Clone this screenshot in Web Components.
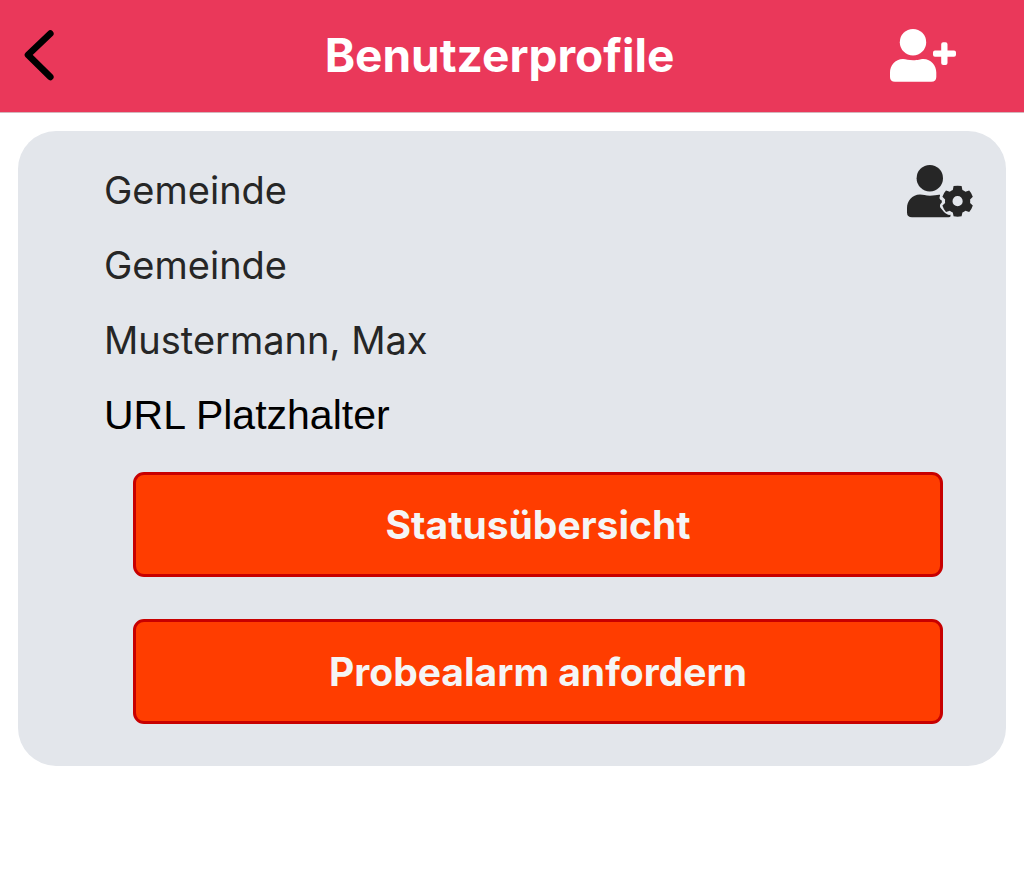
<!DOCTYPE html>
<html lang="de">
<head>
<meta charset="utf-8">
<meta name="viewport" content="width=device-width, initial-scale=1">
<title>Benutzerprofile</title>
<style>
  body { margin: 0; background: #fff; font-family: Inter, "Liberation Sans", sans-serif; color: #262626; }
</style>
</head>
<body>
<profile-app></profile-app>

<template id="app-tpl">
  <style>
    :host { display: block; }
    main { padding: 18px; }
  </style>
  <nav-header>Benutzerprofile</nav-header>
  <main>
    <profile-card>
      <profile-line>Gemeinde</profile-line>
      <profile-line>Gemeinde</profile-line>
      <profile-line>Mustermann, Max</profile-line>
      <profile-line kind="url">URL Platzhalter</profile-line>
      <action-button slot="actions">Statusübersicht</action-button>
      <action-button slot="actions">Probealarm anfordern</action-button>
    </profile-card>
  </main>
</template>

<template id="header-tpl">
  <style>
    :host { display: block; background: #ea385a; border-bottom: 1px solid #d3b6bc; }
    header { display: flex; align-items: center; padding: 27px 68px 29px 24px; }
    h1 { flex: 1; margin: 0; text-align: center; color: #fff; font-size: 46px; line-height: 56px; font-weight: 700; white-space: nowrap; }
    button { display: flex; flex: none; border: 0; padding: 0; background: none; cursor: pointer; }
    .back { width: 85px; }
    svg { display: block; }
  </style>
  <header>
    <button class="back" type="button" aria-label="Zurück">
      <svg width="30" height="52" viewBox="0 0 30 52" fill="none" stroke="#000" stroke-width="6.6" stroke-linecap="round" stroke-linejoin="round"><path d="M26.3 4.6 4 25.900l22.300 22"/></svg>
    </button>
    <h1><slot></slot></h1>
    <button type="button" aria-label="Profil hinzufügen">
      <svg width="66" height="54" viewBox="0 0 66 54" fill="#fff">
        <circle cx="23" cy="14.2" r="13.2"/>
        <path d="M13 31C5 31 0 37.500 0 44.500V49Q0 53.800 5 53.800H41.300Q46.300 53.800 46.300 49V44.500C46.300 37.500 41.300 31 33.300 31C30 31 28 32.300 23.200 32.300S16.300 31 13 31Z"/>
        <path d="M45 22.500h6.200v-6.200q0-2 2-2h2.300q2 0 2 2v6.200H64q2 0 2 2v2.200q0 2-2 2h-6.500v6.400q0 2-2 2h-2.300q-2 0-2-2v-6.400H45q-2 0-2-2v-2.200q0-2 2-2Z"/>
      </svg>
    </button>
  </header>
</template>

<template id="card-tpl">
  <style>
    :host { display: block; background: #e3e6eb; border-radius: 38px; padding: 22px 33px 42px 86px; }
    .top { display: flex; align-items: flex-start; }
    .lines { flex: 1; }
    .settings { display: block; flex: none; margin-top: 12px; border: 0; padding: 0; background: none; cursor: pointer; }
    svg { display: block; }
    .actions { display: flex; flex-direction: column; gap: 42px; padding: 19px 30px 0 29px; }
  </style>
  <div class="top">
    <div class="lines"><slot></slot></div>
    <button class="settings" type="button" aria-label="Profil bearbeiten">
      <svg width="66" height="54" viewBox="0 0 66 54" fill="#262626">
        <circle cx="22.800" cy="13.200" r="13.200"/>
        <path d="M13 29.500C5 29.500 0 36 0 43V47.500Q0 52.300 5 52.300H41.500Q43.500 52.300 43.500 51.300V49.800C41 50.300 39.500 49 37 47L33.300 42.500C32.500 40.500 33 39 34.800 37.500V35.500C32.500 34.500 32 33 33 30.700V29.800C30 29.500 27.500 30.700 23 30.700S16.300 29.500 13 29.500Z"/>
        <g transform="translate(50.600 36.200)">
          <path fill-rule="evenodd" d="M-4-15.100Q0-15.900 4-15.100L4.800-11.200Q6.500-10.600 7.800-9.500L11.600-10.700Q14.200-8 15.200-4.400L12.500-1.700Q12.700 0 12.500 1.700L15.200 4.400Q14.200 8 11.600 10.700L7.800 9.500Q6.500 10.600 4.800 11.200L4 15.100Q0 15.900-4 15.100L-4.800 11.200Q-6.500 10.600-7.800 9.500L-11.600 10.700Q-14.200 8-15.200 4.400L-12.500 1.700Q-12.700 0-12.500-1.700L-15.200-4.400Q-14.200-8-11.600-10.700L-7.800-9.500Q-6.500-10.600-4.800-11.200ZM0-5.100A5.100 5.100 0 1 0 0 5.100A5.100 5.100 0 1 0 0-5.100Z"/>
        </g>
      </svg>
    </button>
  </div>
  <div class="actions"><slot name="actions"></slot></div>
</template>

<template id="line-tpl">
  <style>
    :host { display: block; font-size: 38px; line-height: 75px; }
    :host([kind="url"]) { font-family: "Liberation Sans", Arial, sans-serif; font-size: 41px; color: #000; }
  </style>
  <slot></slot>
</template>

<template id="button-tpl">
  <style>
    :host { display: block; }
    button { display: block; box-sizing: border-box; width: 100%; padding: 26px; border: 3px solid #c80000; border-radius: 11px; background: #ff3d00; color: #f5f5f5; font: 700 39px/47px Inter, "Liberation Sans", sans-serif; cursor: pointer; }
  </style>
  <button type="button"><slot></slot></button>
</template>

<script>
  class TemplateElement extends HTMLElement {
    constructor() {
      super();
      const tpl = document.getElementById(this.constructor.template);
      this.attachShadow({ mode: "open" }).append(tpl.content.cloneNode(true));
    }
  }
  class ProfileLine extends TemplateElement { static template = "line-tpl"; }
  class ActionButton extends TemplateElement { static template = "button-tpl"; }
  class ProfileCard extends TemplateElement { static template = "card-tpl"; }
  class NavHeader extends TemplateElement { static template = "header-tpl"; }
  class ProfileApp extends TemplateElement { static template = "app-tpl"; }
  customElements.define("profile-line", ProfileLine);
  customElements.define("action-button", ActionButton);
  customElements.define("profile-card", ProfileCard);
  customElements.define("nav-header", NavHeader);
  customElements.define("profile-app", ProfileApp);
</script>
</body>
</html>
